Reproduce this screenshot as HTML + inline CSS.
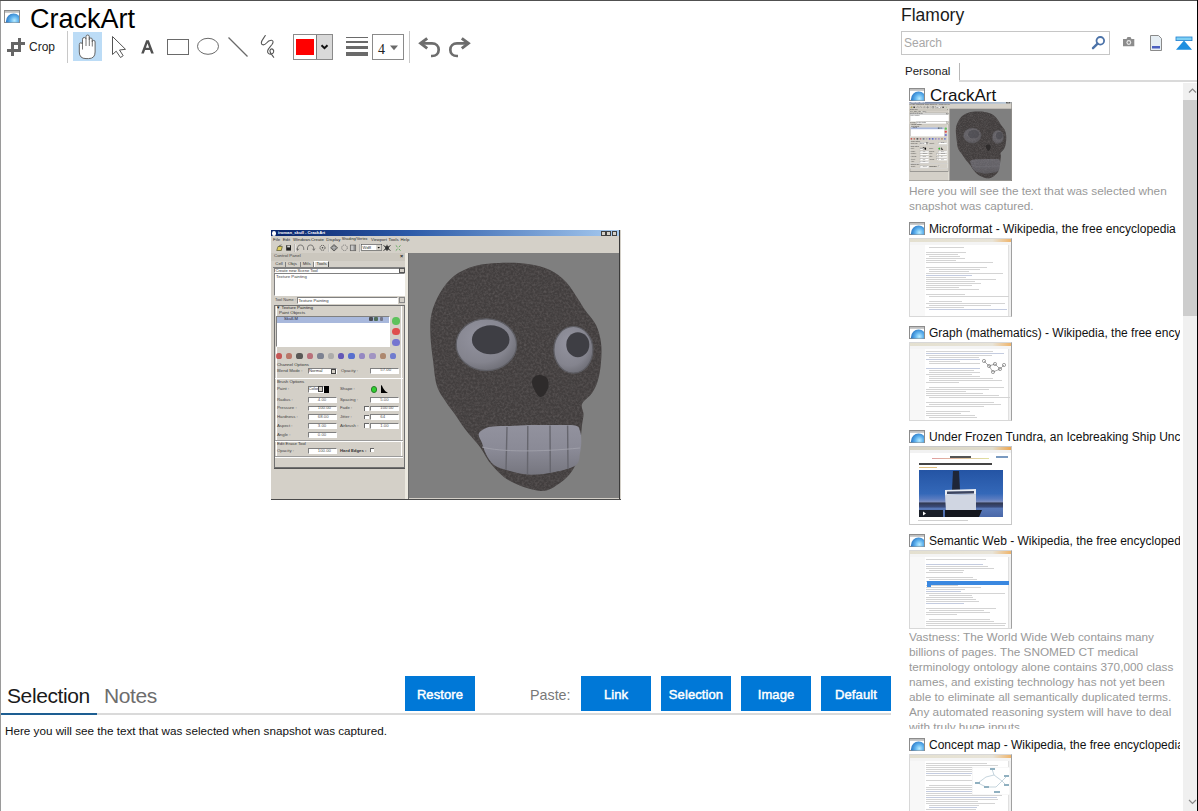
<!DOCTYPE html>
<html><head><meta charset="utf-8">
<style>
*{box-sizing:border-box}
html,body{margin:0;padding:0}
body{width:1198px;height:811px;overflow:hidden;background:#fff;position:relative;font-family:"Liberation Sans",sans-serif;color:#000}
.a{position:absolute}
.t{position:absolute;white-space:nowrap;line-height:1}
.ca{position:absolute;overflow:hidden}
.ca i,.ca b{position:absolute;display:block;box-sizing:border-box}
.ca b{font-weight:normal;white-space:nowrap;line-height:1;font-style:normal}
.ca2 .lt{opacity:.45}.ca2 .lp{opacity:.5}.ca2 .tb{opacity:.45}
.btn{position:absolute;top:676px;width:70px;height:35px;background:#0078d7;color:#fff;font-size:13px;text-align:center;line-height:37px;-webkit-text-stroke:0.45px #fff;letter-spacing:0.1px}
</style></head><body>
<!-- frame borders -->
<div class="a" style="left:0;top:0;width:1198px;height:1px;background:#505050"></div>
<div class="a" style="left:0;top:1px;width:1px;height:810px;background:#9a9a9a"></div>
<div class="a" style="left:1197px;top:0;width:1px;height:811px;background:#000"></div>

<!-- LEFT: title -->
<svg class="a" style="left:4px;top:10px" width="16" height="13" viewBox="0 0 16 13"><defs><radialGradient id="g99" cx="0.55" cy="0.45" r="0.6"><stop offset="0" stop-color="#b8ecff"/><stop offset="0.45" stop-color="#5fb2ee"/><stop offset="1" stop-color="#1f6cbc"/></radialGradient><clipPath id="c99"><rect x="1" y="2.5" width="14" height="10"/></clipPath></defs><rect x="0.5" y="0.5" width="15" height="12" fill="#fff" stroke="#8c8c8c"/><rect x="1" y="1" width="14" height="1.8" fill="#c0c0c0"/><circle cx="9.6" cy="11.2" r="7.6" fill="url(#g99)" clip-path="url(#c99)"/></svg>
<div class="t" style="left:30px;top:6px;font-size:27px">CrackArt</div>

<!-- toolbar -->
<!-- crop icon -->
<svg class="a" style="left:0;top:30px" width="30" height="30" viewBox="0 30 30 30">
<g fill="#666"><rect x="11" y="42" width="3" height="14"/><rect x="18" y="38" width="3" height="14"/><rect x="11" y="42" width="14" height="3"/><rect x="7" y="49" width="14" height="3"/></g></svg>
<div class="t" style="left:29px;top:41px;font-size:12px;color:#222">Crop</div>
<div class="a" style="left:67px;top:31px;width:1px;height:32px;background:#c8c8c8"></div>
<div class="a" style="left:73px;top:32px;width:29px;height:29px;background:#bcdcf6"></div>
<svg class="a" style="left:0;top:0" width="480" height="70" viewBox="0 0 480 70">
 <!-- hand -->
 <path d="M79.3 52 L79.3 44.5 Q79.3 42.8 80.9 42.8 Q82.5 42.8 82.5 44.5 L82.5 39.2 Q82.5 37.5 84.25 37.5 Q86 37.5 86 39.2 L86 36.7 Q86 35 87.65 35 Q89.3 35 89.3 36.7 L89.3 39.7 Q89.3 38 90.8 38 Q92.3 38 92.3 39.7 L92.3 42 Q92.3 40.4 93.7 40.4 Q95.1 40.4 95.1 42 L95.1 52 Q95.1 58.6 88.5 58.6 L86 58.6 Q79.3 58.6 79.3 52 Z" fill="#fff" stroke="#666" stroke-width="1"/>
 <path d="M82.5 44.5 L82.5 49.5 M86 39.2 L86 46 M89.3 36.7 L89.3 46 M92.3 39.7 L92.3 46.5" stroke="#666" stroke-width="0.9" fill="none"/>
 <!-- cursor -->
 <path d="M112.5 36.5 L112.5 54.5 L116.2 51.2 L120.5 57.5 L123.2 55.7 L119.5 50 L125.5 49.3 Z" fill="#fff" stroke="#555" stroke-width="1" stroke-linejoin="round"/>
 <!-- A -->
 <path d="M141.2 53.6 L146.2 40.2 L148.8 40.2 L153.8 53.6 L151.2 53.6 L149.9 50 L145.1 50 L143.8 53.6 Z M145.9 47.8 L149.1 47.8 L147.5 43.2 Z" fill="#505050" fill-rule="evenodd"/>
 <!-- rect -->
 <rect x="167.5" y="39.5" width="21" height="15" fill="none" stroke="#6a6a6a" stroke-width="1"/>
 <!-- ellipse -->
 <ellipse cx="208" cy="46.3" rx="10.5" ry="8" fill="none" stroke="#6a6a6a" stroke-width="1"/>
 <!-- line -->
 <path d="M228.5 37.5 L247.5 56.5" stroke="#6a6a6a" stroke-width="1.2"/>
 <!-- squiggle -->
 <path d="M265.3 35.5 C264 38 261 40.5 261.3 43 C261.5 45.5 264.5 45.5 266.5 43 C268 41 269 40 271.5 40.2 C273.5 40.5 273.5 42.5 272 44.5 C270 47 268 48.5 267.6 51 C267.3 53.5 269.5 54.5 271.5 54 C273.5 53.5 274.5 51 273 49.5 C271.5 48 269.5 49.5 270 51.5 C270.5 53.5 272.5 55.5 273.7 57.3" fill="none" stroke="#555" stroke-width="1.1" stroke-linecap="round"/>
 <!-- color picker -->
 <rect x="293.5" y="34.5" width="39" height="25" fill="#fff" stroke="#8a8a8a"/>
 <rect x="296" y="39" width="18" height="16" fill="#f00"/>
 <rect x="316" y="35" width="16" height="24" fill="#d9d9d9"/>
 <path d="M316.5 35 L316.5 59" stroke="#7a7a7a"/>
 <path d="M321.5 45.2 L324.5 48.2 L327.5 45.2" fill="none" stroke="#111" stroke-width="2"/>
 <!-- line widths -->
 <rect x="346" y="37" width="22" height="1" fill="#6a6a6a"/>
 <rect x="346" y="41" width="22" height="2" fill="#6a6a6a"/>
 <rect x="346" y="46" width="22" height="3" fill="#6a6a6a"/>
 <rect x="346" y="52" width="22" height="4" fill="#6a6a6a"/>
 <rect x="372.5" y="34.5" width="31" height="25" fill="#fff" stroke="#8a8a8a"/>
 <path d="M390 45.5 L398 45.5 L394 50.3 Z" fill="#6a6a6a"/>
 <!-- sep -->
 <rect x="409" y="31" width="1" height="32" fill="#c8c8c8"/>
 <!-- undo -->
 <path d="M420.5 43.3 L432 43.3 C436 43.3 438.7 46 438.7 49.7 C438.7 53.4 436 56 432 56 L431 56" fill="none" stroke="#6d6d6d" stroke-width="2.7"/>
 <path d="M427.2 38.3 L420.6 43.3 L427.2 48.3" fill="none" stroke="#6d6d6d" stroke-width="2.9" stroke-linejoin="miter" stroke-miterlimit="10"/>
 <!-- redo -->
 <path d="M468.5 43.3 L457 43.3 C453 43.3 450.3 46 450.3 49.7 C450.3 53.4 453 56 457 56 L458 56" fill="none" stroke="#6d6d6d" stroke-width="2.7"/>
 <path d="M461.8 38.3 L468.4 43.3 L461.8 48.3" fill="none" stroke="#6d6d6d" stroke-width="2.9" stroke-linejoin="miter" stroke-miterlimit="10"/>
</svg>
<div class="t" style="left:378px;top:43px;font-size:14px;font-family:'Liberation Serif',serif;color:#222">4</div>



<!-- CENTER IMAGE -->
<div class="ca" style="left:271px;top:230px;width:350px;height:270px"><i style="left:0px;top:0px;width:350px;height:270px;background:#d4d0c8;"></i><i class="tb" style="left:0px;top:0px;width:348px;height:6.3px;background:linear-gradient(90deg,#0a246a 0%,#2c5aa8 40%,#a6caf0 100%);"></i><b style="left:7px;top:0.9px;font-size:4.2px;color:#fff;font-weight:bold">iroman_skull - CrackArt</b><i style="left:1.2px;top:0.8px;width:4.2px;height:4.8px;background:#fff;border-radius:50%"></i><i style="left:330px;top:0.6px;width:5px;height:5px;background:#d4d0c8;border:0.5px solid #404040"></i><i style="left:335.2px;top:0.6px;width:5px;height:5px;background:#d4d0c8;border:0.5px solid #404040"></i><i style="left:341.2px;top:0.6px;width:5px;height:5px;background:#d4d0c8;border:0.5px solid #404040"></i><b style="left:2px;top:7.8px;font-size:4.4px;color:#2a2a2a;">File</b><b style="left:11.7px;top:7.8px;font-size:4.4px;color:#2a2a2a;">Edit</b><b style="left:22px;top:7.8px;font-size:4.3px;color:#2a2a2a;">Windows</b><b style="left:40px;top:7.8px;font-size:4.3px;color:#2a2a2a;">Create</b><b style="left:55.3px;top:7.8px;font-size:4.3px;color:#2a2a2a;">Display</b><b style="left:70.7px;top:7.8px;font-size:3.8px;color:#2a2a2a;">Shading/Vertex</b><b style="left:100px;top:7.8px;font-size:4.1px;color:#2a2a2a;">Viewport</b><b style="left:117.5px;top:7.8px;font-size:4.3px;color:#2a2a2a;">Tools</b><b style="left:129.5px;top:7.8px;font-size:4.3px;color:#2a2a2a;">Help</b><svg style="position:absolute;left:0;top:0" width="140" height="24" viewBox="0 0 140 24">
<path d="M5.7 20.5 L7 16.5 L11.3 16.5 L10.3 20.5Z" fill="#e0d060" stroke="#404020" stroke-width="0.6"/><path d="M8 16 L10.5 14.8" stroke="#303030" stroke-width="0.6"/>
<rect x="15.2" y="15.2" width="4.8" height="5.4" fill="#202020"/><rect x="16.2" y="15.6" width="2.8" height="1.8" fill="#d8d8d8"/>
<rect x="23.5" y="14" width="0.6" height="8" fill="#9a9a9a"/><rect x="24.1" y="14" width="0.5" height="8" fill="#fff"/>
<path d="M26.5 20 Q26 15 29.5 15 Q33 15 32.8 20" fill="none" stroke="#505050" stroke-width="0.7"/><path d="M25.5 18.5 L26.5 20.5 L28 18.8" fill="none" stroke="#505050" stroke-width="0.6"/>
<path d="M36.5 20 Q36 15 39.5 15 Q43 15 42.8 20" fill="none" stroke="#505050" stroke-width="0.7"/><path d="M41.5 18.8 L42.8 20.5 L44 18.5" fill="none" stroke="#505050" stroke-width="0.6"/>
<circle cx="51.5" cy="17.8" r="2.5" fill="none" stroke="#404040" stroke-width="0.9" stroke-dasharray="1.2 0.8"/><circle cx="51.5" cy="17.8" r="0.8" fill="#404040"/>
<rect x="57.2" y="14" width="0.6" height="8" fill="#9a9a9a"/><rect x="57.8" y="14" width="0.5" height="8" fill="#fff"/>
<path d="M63 14.6 L66.6 17.8 L63 21 L59.6 17.8Z" fill="#808080" stroke="#303030" stroke-width="0.6"/><path d="M60.5 17.8 L65.7 17.8 M63 15.5 L63 20" stroke="#e0e0e0" stroke-width="0.5"/>
<circle cx="73.5" cy="17.8" r="2.8" fill="none" stroke="#606060" stroke-width="0.7" stroke-dasharray="1.4 0.8"/>
<rect x="79.2" y="15" width="5.6" height="5.8" fill="#909090" stroke="#505050" stroke-width="0.5"/><rect x="80" y="15.6" width="2.5" height="4.5" fill="#c8c8c8"/>
<rect x="88.4" y="14" width="0.6" height="8" fill="#9a9a9a"/><rect x="89" y="14" width="0.5" height="8" fill="#fff"/>
<rect x="90.2" y="14.3" width="20.5" height="6.3" fill="#fff" stroke="#404040" stroke-width="0.6"/><rect x="105.2" y="15" width="5" height="5" fill="#d4d0c8"/><path d="M106.5 17 L108.9 17 L107.7 18.5Z" fill="#000"/>
<text x="91.5" y="19.3" font-size="4.2" fill="#333" font-family="Liberation Sans">Wd8</text>
<path d="M112.5 15.5 L119.5 20.5 M119.5 15.5 L112.5 20.5 M116 14.8 L116 21" stroke="#202020" stroke-width="0.9"/><circle cx="116" cy="18" r="2" fill="#303030"/>
<path d="M124.8 15.5 L126.5 17 M129.5 15.5 L127.8 17 M124.8 20.5 L126.5 19 M129.5 20.5 L127.8 19" stroke="#40a040" stroke-width="0.8"/>
</svg>
<i style="left:137.5px;top:23px;width:210.5px;height:245px;background:#7f7f7f;"></i><i style="left:134px;top:23px;width:3px;height:247px;background:#ece9e0;"></i><i style="left:136.6px;top:23px;width:1px;height:247px;background:#6a6a6a;"></i><i style="left:348px;top:0px;width:1.2px;height:270px;background:#3a3a3a;"></i><i style="left:0px;top:268.6px;width:350px;height:1.4px;background:#4a4a4a;"></i><i style="left:0px;top:23px;width:134px;height:8px;background:#cbc7be;"></i><b style="left:3px;top:24.4px;font-size:4.4px;color:#444;">Control Panel</b><b style="left:129px;top:24px;font-size:5.5px;color:#222;font-weight:bold">×</b><i style="left:2px;top:31px;width:56px;height:6.3px;background:#d4d0c8;"></i><i style="left:2.3px;top:31.6px;width:12.7px;height:5.7px;background:#d4d0c8;border-right:0.7px solid #808080"></i><b style="left:4.3px;top:32.4px;font-size:4.3px;color:#333;">Cell</b><i style="left:15px;top:31.6px;width:14.7px;height:5.7px;background:#d4d0c8;border-right:0.7px solid #808080"></i><b style="left:17px;top:32.4px;font-size:4.3px;color:#333;">Objs</b><i style="left:29.7px;top:31.6px;width:13.3px;height:5.7px;background:#d4d0c8;border-right:0.7px solid #808080"></i><b style="left:31.7px;top:32.4px;font-size:4.3px;color:#333;">Mtls</b><i style="left:43px;top:31px;width:15.3px;height:6.3px;background:#e0ddd6;border-right:0.8px solid #555;border-left:0.5px solid #fff;border-top:0.5px solid #fff"></i><b style="left:45.5px;top:31.8px;font-size:4.3px;color:#222;">Tools</b><i style="left:2px;top:37px;width:132px;height:0.7px;background:#808080;"></i><i style="left:3px;top:37.5px;width:131px;height:5.4px;background:#fff;border-top:1px solid #808080;border-left:1px solid #808080;border-right:1px solid #fff;border-bottom:1px solid #fff"></i><b style="left:4.5px;top:38.6px;font-size:4.1px;color:#333;">Create new Scene Tool</b><i style="left:128px;top:38.2px;width:5.5px;height:4.4px;background:#d4d0c8;border:0.5px solid #555"></i><i style="left:3px;top:43.2px;width:131px;height:23.3px;background:#fff;border-top:1px solid #808080;border-left:1px solid #808080;border-right:1px solid #fff;border-bottom:1px solid #fff"></i><b style="left:5px;top:44.5px;font-size:4.3px;color:#444;">Texture Painting</b><b style="left:4px;top:68.3px;font-size:3.9px;color:#444;">Tool Name :</b><i style="left:26px;top:67.4px;width:101.3px;height:6.5px;background:#fff;border-top:1px solid #808080;border-left:1px solid #808080;border-right:1px solid #fff;border-bottom:1px solid #fff"></i><b style="left:27.5px;top:68.6px;font-size:4.2px;color:#333;">Texture Painting</b><i style="left:128px;top:67px;width:6px;height:6px;background:#d4d0c8;border:0.5px solid #888"></i><i style="left:2.5px;top:75px;width:131px;height:163px;background:transparent;border:0.7px solid #707070"></i><i style="left:4.5px;top:75.5px;width:126px;height:150px;background:#d4d0c8;"></i><i style="left:4.5px;top:75.5px;width:1px;height:150px;background:#fff;"></i><i style="left:129.6px;top:75.5px;width:1px;height:150px;background:#fff;"></i><b style="left:5px;top:75.7px;font-size:4.4px;color:#222;">▼ Texture Painting</b><b style="left:8px;top:80.8px;font-size:4.4px;color:#333;">Paint Objects</b><i style="left:5.3px;top:86.3px;width:113.7px;height:30.7px;background:#fff;border-top:1px solid #808080;border-left:1px solid #808080;border-right:1px solid #fff;border-bottom:1px solid #fff"></i><i style="left:6.3px;top:87.2px;width:111.7px;height:5.6px;background:#a8b8dc;"></i><b style="left:13px;top:86.8px;font-size:4.2px;color:#223;">Skull-M</b><i style="left:98px;top:87.2px;width:3.6px;height:3.6px;background:#333;border-radius:1px;opacity:.8"></i><i style="left:103px;top:87.2px;width:3.6px;height:3.6px;background:#3a5a3a;border-radius:1px;opacity:.8"></i><i style="left:108.5px;top:87.2px;width:3.6px;height:3.6px;background:#667;border-radius:1px;opacity:.8"></i><i style="left:121.4px;top:87.2px;width:7.6px;height:7.6px;background:#50c050;border-radius:50%;opacity:.9"></i><i style="left:121.4px;top:97.9px;width:7.6px;height:7.6px;background:#e04040;border-radius:50%;opacity:.9"></i><i style="left:121.4px;top:108.60000000000001px;width:7.6px;height:7.6px;background:#6a6ad0;border-radius:50%;opacity:.9"></i><i style="left:4.5px;top:122.5px;width:6.5px;height:6.5px;background:#c03030;border-radius:40%;opacity:.75"></i><i style="left:14.9px;top:122.5px;width:6.5px;height:6.5px;background:#b05a4a;border-radius:40%;opacity:.75"></i><i style="left:25.3px;top:122.5px;width:6.5px;height:6.5px;background:#303030;border-radius:40%;opacity:.75"></i><i style="left:35.7px;top:122.5px;width:6.5px;height:6.5px;background:#b05060;border-radius:40%;opacity:.75"></i><i style="left:46.1px;top:122.5px;width:6.5px;height:6.5px;background:#606880;border-radius:40%;opacity:.75"></i><i style="left:56.5px;top:122.5px;width:6.5px;height:6.5px;background:#a0a0a0;border-radius:40%;opacity:.75"></i><i style="left:66.9px;top:122.5px;width:6.5px;height:6.5px;background:#4030b0;border-radius:40%;opacity:.75"></i><i style="left:77.3px;top:122.5px;width:6.5px;height:6.5px;background:#3050d0;border-radius:40%;opacity:.75"></i><i style="left:87.7px;top:122.5px;width:6.5px;height:6.5px;background:#8070c0;border-radius:40%;opacity:.75"></i><i style="left:98.10000000000001px;top:122.5px;width:6.5px;height:6.5px;background:#9080c0;border-radius:40%;opacity:.75"></i><i style="left:108.5px;top:122.5px;width:6.5px;height:6.5px;background:#a07050;border-radius:40%;opacity:.75"></i><i style="left:118.9px;top:122.5px;width:6.5px;height:6.5px;background:#5060d0;border-radius:40%;opacity:.75"></i><b style="left:6px;top:132.6px;font-size:4.3px;color:#333;">Channel Options</b><b style="left:6px;top:138.8px;font-size:4.3px;color:#444;">Blend Mode :</b><i style="left:36.5px;top:137.7px;width:29.5px;height:6.8px;background:#fff;border-top:1px solid #808080;border-left:1px solid #808080;border-right:1px solid #fff;border-bottom:1px solid #fff"></i><b style="left:38px;top:138.9px;font-size:4.2px;color:#333;">Normal</b><i style="left:60px;top:138.6px;width:5.4px;height:5px;background:#d4d0c8;border:0.5px solid #444"></i><b style="left:70px;top:139px;font-size:4.3px;color:#444;">Opacity :</b><i style="left:99px;top:137.7px;width:29.4px;height:6.8px;background:#fff;border-top:1px solid #808080;border-left:1px solid #808080;border-right:1px solid #fff;border-bottom:1px solid #fff"></i><b style="left:109.28999999999999px;top:138.29999999999998px;font-size:4.3px;color:#555;">57.00</b><i style="left:3.5px;top:147.6px;width:128px;height:0.6px;background:#9a9a9a;"></i><i style="left:3.5px;top:148.2px;width:128px;height:0.6px;background:#fff;"></i><b style="left:6px;top:149.8px;font-size:4.3px;color:#333;">Brush Options</b><b style="left:6px;top:156.8px;font-size:4.3px;color:#444;">Paint :</b><i style="left:36.5px;top:155.6px;width:16px;height:7.2px;background:#fff;border-top:1px solid #808080;border-left:1px solid #808080;border-right:1px solid #fff;border-bottom:1px solid #fff"></i><b style="left:37.5px;top:157px;font-size:4.1px;color:#333;">Color</b><i style="left:47px;top:156.4px;width:5px;height:5.6px;background:#d4d0c8;border:0.5px solid #444"></i><i style="left:53px;top:155.6px;width:5.2px;height:7.4px;background:#000;"></i><b style="left:69px;top:157px;font-size:4.3px;color:#444;">Shape :</b><i style="left:99.5px;top:156px;width:6.5px;height:6.5px;background:#30d030;border-radius:50%;border:0.6px solid #2a7a2a"></i><svg style="position:absolute;left:109px;top:154px" width="10" height="10" viewBox="0 0 10 10"><path d="M1 1 Q2 1 3 4 Q5 8 8 9 L1 9Z" fill="#000"/></svg><b style="left:6px;top:167.8px;font-size:4.3px;color:#444;">Radius :</b><i style="left:36.5px;top:167px;width:29.5px;height:5.8px;background:#fff;border-top:1px solid #808080;border-left:1px solid #808080;border-right:1px solid #fff;border-bottom:1px solid #fff"></i><b style="left:46.825px;top:167.6px;font-size:4.3px;color:#555;">4.00</b><b style="left:69px;top:167.8px;font-size:4.3px;color:#444;">Spacing :</b><i style="left:99px;top:167px;width:29.4px;height:5.8px;background:#fff;border-top:1px solid #808080;border-left:1px solid #808080;border-right:1px solid #fff;border-bottom:1px solid #fff"></i><b style="left:109.28999999999999px;top:167.6px;font-size:4.3px;color:#555;">5.00</b><b style="left:6px;top:176.4px;font-size:4.3px;color:#444;">Pressure :</b><i style="left:36.5px;top:175.6px;width:29.5px;height:5.8px;background:#fff;border-top:1px solid #808080;border-left:1px solid #808080;border-right:1px solid #fff;border-bottom:1px solid #fff"></i><b style="left:46.825px;top:176.2px;font-size:4.3px;color:#555;">100.00</b><b style="left:69px;top:176.4px;font-size:4.3px;color:#444;">Fade :</b><i style="left:99px;top:175.6px;width:29.4px;height:5.8px;background:#fff;border-top:1px solid #808080;border-left:1px solid #808080;border-right:1px solid #fff;border-bottom:1px solid #fff"></i><b style="left:109.28999999999999px;top:176.2px;font-size:4.3px;color:#555;">100.00</b><i style="left:93.4px;top:175.79999999999998px;width:4.2px;height:4.8px;background:#fff;border-top:0.6px solid #666;border-left:0.6px solid #666"></i><b style="left:6px;top:185.20000000000002px;font-size:4.3px;color:#444;">Hardness :</b><i style="left:36.5px;top:184.4px;width:29.5px;height:5.8px;background:#fff;border-top:1px solid #808080;border-left:1px solid #808080;border-right:1px solid #fff;border-bottom:1px solid #fff"></i><b style="left:46.825px;top:185.0px;font-size:4.3px;color:#555;">68.00</b><b style="left:69px;top:185.20000000000002px;font-size:4.3px;color:#444;">Jitter :</b><i style="left:99px;top:184.4px;width:29.4px;height:5.8px;background:#fff;border-top:1px solid #808080;border-left:1px solid #808080;border-right:1px solid #fff;border-bottom:1px solid #fff"></i><b style="left:109.28999999999999px;top:185.0px;font-size:4.3px;color:#555;">64</b><i style="left:93.4px;top:184.6px;width:4.2px;height:4.8px;background:#fff;border-top:0.6px solid #666;border-left:0.6px solid #666"></i><b style="left:6px;top:193.8px;font-size:4.3px;color:#444;">Aspect :</b><i style="left:36.5px;top:193px;width:29.5px;height:5.8px;background:#fff;border-top:1px solid #808080;border-left:1px solid #808080;border-right:1px solid #fff;border-bottom:1px solid #fff"></i><b style="left:46.825px;top:193.6px;font-size:4.3px;color:#555;">3.00</b><b style="left:69px;top:193.8px;font-size:4.3px;color:#444;">Airbrush :</b><i style="left:99px;top:193px;width:29.4px;height:5.8px;background:#fff;border-top:1px solid #808080;border-left:1px solid #808080;border-right:1px solid #fff;border-bottom:1px solid #fff"></i><b style="left:109.28999999999999px;top:193.6px;font-size:4.3px;color:#555;">1.00</b><i style="left:93.4px;top:193.2px;width:4.2px;height:4.8px;background:#fff;border-top:0.6px solid #666;border-left:0.6px solid #666"></i><b style="left:6px;top:202.8px;font-size:4.3px;color:#444;">Angle :</b><i style="left:36.5px;top:202px;width:29.5px;height:5.8px;background:#fff;border-top:1px solid #808080;border-left:1px solid #808080;border-right:1px solid #fff;border-bottom:1px solid #fff"></i><b style="left:46.825px;top:202.6px;font-size:4.3px;color:#555;">0.00</b><i style="left:3.5px;top:210.2px;width:128px;height:0.6px;background:#9a9a9a;"></i><i style="left:3.5px;top:210.8px;width:128px;height:0.6px;background:#fff;"></i><b style="left:6px;top:212.4px;font-size:4.3px;color:#333;">Edit Erase Tool</b><b style="left:6px;top:218.9px;font-size:4.3px;color:#444;">Opacity :</b><i style="left:36.5px;top:218px;width:29.5px;height:5.8px;background:#fff;border-top:1px solid #808080;border-left:1px solid #808080;border-right:1px solid #fff;border-bottom:1px solid #fff"></i><b style="left:46.825px;top:218.6px;font-size:4.3px;color:#555;">100.00</b><b style="left:69px;top:218.9px;font-size:4.3px;color:#333;font-weight:bold">Hard Edges :</b><i style="left:98.7px;top:217.6px;width:4.5px;height:4.8px;background:#fff;border-top:0.6px solid #666;border-left:0.6px solid #666"></i><i style="left:3.5px;top:226px;width:128px;height:0.6px;background:#9a9a9a;"></i><i style="left:3.5px;top:226.6px;width:128px;height:0.6px;background:#fff;"></i><i style="left:2.5px;top:237.5px;width:131px;height:0.8px;background:#555;"></i><svg style="position:absolute;left:0;top:0" width="350" height="270" viewBox="271 230 350 270">
<defs>
<filter id="nz1" x="0" y="0" width="1" height="1" color-interpolation-filters="sRGB"><feTurbulence type="fractalNoise" baseFrequency="0.45" numOctaves="2" seed="7"/><feColorMatrix values="0 0 0 0 0.40  0 0 0 0 0.38  0 0 0 0 0.38  1.2 0 0 0 -0.42"/><feComposite in2="SourceGraphic" operator="in"/></filter>
<radialGradient id="eyeL1" cx="0.4" cy="0.35" r="0.7"><stop offset="0" stop-color="#9494a0"/><stop offset="0.7" stop-color="#84848e"/><stop offset="1" stop-color="#6c6c74"/></radialGradient>
<linearGradient id="teeth1" x1="0" y1="0" x2="0" y2="1"><stop offset="0" stop-color="#92929e"/><stop offset="0.5" stop-color="#8a8a96"/><stop offset="1" stop-color="#76767f"/></linearGradient>
</defs>
<path d="M502.8 262.8 C494.0 263.1 483.1 263.8 475.0 266.0 C466.9 268.2 459.8 271.5 454.0 276.0 C448.2 280.5 443.8 286.7 440.0 293.0 C436.2 299.3 433.1 306.8 431.5 314.0 C429.9 321.2 430.2 328.3 430.5 336.0 C430.8 343.7 431.9 351.7 433.0 360.0 C434.1 368.3 434.8 379.0 437.0 386.0 C439.2 393.0 443.2 397.5 446.0 402.0 C448.8 406.5 450.8 408.5 454.0 413.0 C457.2 417.5 460.7 423.3 465.0 429.0 C469.3 434.7 475.7 441.2 480.0 447.0 C484.3 452.8 485.8 457.9 490.7 463.5 C495.6 469.1 501.4 476.2 509.7 480.8 C518.0 485.4 532.4 490.6 540.8 491.0 C549.2 491.4 554.8 486.3 560.0 483.0 C565.2 479.7 569.0 475.3 572.0 471.0 C575.0 466.7 576.6 462.2 578.0 457.0 C579.4 451.8 579.8 445.3 580.5 440.0 C581.2 434.7 581.5 429.3 582.0 425.0 C582.5 420.7 583.5 417.5 583.5 414.0 C583.5 410.5 580.6 407.5 582.0 404.0 C583.4 400.5 589.3 397.0 592.0 393.0 C594.7 389.0 596.5 385.2 598.0 380.0 C599.5 374.8 600.5 368.2 601.0 362.0 C601.5 355.8 601.8 349.2 601.0 343.0 C600.2 336.8 598.7 330.5 596.0 325.0 C593.3 319.5 588.0 314.3 585.0 310.0 C582.0 305.7 581.2 303.7 578.0 299.0 C574.8 294.3 570.7 286.8 566.0 282.0 C561.3 277.2 556.3 273.0 550.0 270.0 C543.7 267.0 535.9 265.2 528.0 264.0 C520.1 262.8 511.6 262.5 502.8 262.8 Z" fill="#423e3e"/>
<path d="M502.8 262.8 C494.0 263.1 483.1 263.8 475.0 266.0 C466.9 268.2 459.8 271.5 454.0 276.0 C448.2 280.5 443.8 286.7 440.0 293.0 C436.2 299.3 433.1 306.8 431.5 314.0 C429.9 321.2 430.2 328.3 430.5 336.0 C430.8 343.7 431.9 351.7 433.0 360.0 C434.1 368.3 434.8 379.0 437.0 386.0 C439.2 393.0 443.2 397.5 446.0 402.0 C448.8 406.5 450.8 408.5 454.0 413.0 C457.2 417.5 460.7 423.3 465.0 429.0 C469.3 434.7 475.7 441.2 480.0 447.0 C484.3 452.8 485.8 457.9 490.7 463.5 C495.6 469.1 501.4 476.2 509.7 480.8 C518.0 485.4 532.4 490.6 540.8 491.0 C549.2 491.4 554.8 486.3 560.0 483.0 C565.2 479.7 569.0 475.3 572.0 471.0 C575.0 466.7 576.6 462.2 578.0 457.0 C579.4 451.8 579.8 445.3 580.5 440.0 C581.2 434.7 581.5 429.3 582.0 425.0 C582.5 420.7 583.5 417.5 583.5 414.0 C583.5 410.5 580.6 407.5 582.0 404.0 C583.4 400.5 589.3 397.0 592.0 393.0 C594.7 389.0 596.5 385.2 598.0 380.0 C599.5 374.8 600.5 368.2 601.0 362.0 C601.5 355.8 601.8 349.2 601.0 343.0 C600.2 336.8 598.7 330.5 596.0 325.0 C593.3 319.5 588.0 314.3 585.0 310.0 C582.0 305.7 581.2 303.7 578.0 299.0 C574.8 294.3 570.7 286.8 566.0 282.0 C561.3 277.2 556.3 273.0 550.0 270.0 C543.7 267.0 535.9 265.2 528.0 264.0 C520.1 262.8 511.6 262.5 502.8 262.8 Z" fill="#000" filter="url(#nz1)"/>
<ellipse class="lt" cx="486.4" cy="344.7" rx="30.2" ry="25.9" fill="url(#eyeL1)" stroke="#5e5e64" stroke-width="1.2"/>
<ellipse class="lp" cx="490.7" cy="339.8" rx="18.8" ry="14.5" fill="#3e3e44"/>
<ellipse class="lt" cx="573.4" cy="349.8" rx="19.5" ry="23.3" fill="url(#eyeL1)" stroke="#5e5e64" stroke-width="1.2"/>
<ellipse class="lp" cx="577.8" cy="344.7" rx="11.5" ry="12.5" fill="#3e3e44"/>
<path d="M534.0 377.0 C535.3 375.7 537.8 374.8 540.0 375.0 C542.2 375.2 545.6 376.2 547.0 378.0 C548.4 379.8 548.8 383.3 548.5 386.0 C548.2 388.7 546.4 392.2 545.0 394.0 C543.6 395.8 541.7 397.5 540.0 397.0 C538.3 396.5 536.3 393.3 535.0 391.0 C533.7 388.7 532.2 385.3 532.0 383.0 C531.8 380.7 532.7 378.3 534.0 377.0 Z" fill="#2e2b2b"/>
<path d="M478.7 434.0 C479.2 431.6 482.7 429.8 485.0 428.5 C487.3 427.2 488.3 426.8 492.5 426.4 C496.7 426.0 503.8 426.2 510.0 426.0 C516.2 425.8 522.5 425.2 530.0 425.0 C537.5 424.8 547.5 424.9 555.0 425.0 C562.5 425.1 571.1 424.6 575.3 425.6 C579.5 426.6 579.0 428.4 580.0 431.0 C581.0 433.6 581.3 437.3 581.3 441.0 C581.3 444.7 580.9 449.0 580.0 453.0 C579.1 457.0 580.2 461.8 576.0 465.0 C571.8 468.2 562.6 470.4 555.0 472.0 C547.4 473.6 537.9 475.0 530.4 474.8 C522.9 474.6 516.1 472.6 510.0 471.0 C503.9 469.4 498.0 467.8 494.0 465.0 C490.0 462.2 488.0 457.7 486.0 454.0 C484.0 450.3 483.2 446.3 482.0 443.0 C480.8 439.7 478.2 436.4 478.7 434.0 Z" fill="url(#teeth1)" class="lt"/>
<path d="M507 427 L506 470 M527.8 426 L527.5 474.5 M550 425.5 L550.3 473 M567.6 425.5 L568 469" stroke="#66666e" stroke-width="1.4" class="lt"/>
<path d="M482 447 C500 452 540 452 580 448" stroke="#a0a0aa" stroke-width="0.9" fill="none" class="lt"/>
</svg></div>
<!-- BOTTOM LEFT -->
<div class="t" style="left:7px;top:685px;font-size:21px;letter-spacing:-0.4px;color:#1a1a1a">Selection</div>
<div class="t" style="left:104px;top:685px;font-size:21px;letter-spacing:-0.4px;color:#6d6d6d">Notes</div>
<div class="a" style="left:1px;top:713px;width:890px;height:2px;background:#dadada"></div>
<div class="a" style="left:1px;top:713px;width:96px;height:2px;background:#1d5e92"></div>
<div class="btn" style="left:405px">Restore</div>
<div class="t" style="left:530px;top:688px;font-size:14.3px;color:#787878">Paste:</div>
<div class="btn" style="left:581px">Link</div>
<div class="btn" style="left:661px">Selection</div>
<div class="btn" style="left:741px">Image</div>
<div class="btn" style="left:821px">Default</div>
<div class="t" style="left:5px;top:725px;font-size:11.7px;color:#111">Here you will see the text that was selected when snapshot was captured.</div>
<!-- RIGHT PANEL -->
<div class="t" style="left:901px;top:7px;font-size:17.5px;color:#1a1a1a">Flamory</div>
<div class="a" style="left:901px;top:31px;width:209px;height:24px;border:1px solid #c6c6c6;background:#fff"></div>
<div class="t" style="left:904px;top:37px;font-size:12px;color:#a8a8a8">Search</div>
<svg class="a" style="left:1080px;top:25px" width="118" height="40" viewBox="1080 25 118 40">
 <circle cx="1100.3" cy="40.8" r="3.8" fill="none" stroke="#4b72a8" stroke-width="1.8"/>
 <path d="M1097.6 43.6 L1093 48.2" stroke="#4b72a8" stroke-width="2.4" stroke-linecap="round"/>
 <!-- camera -->
 <path d="M1123 39 L1126.5 39 L1127.5 37 L1130.5 37 L1131.5 39 L1134.3 39 L1134.3 46.3 L1123 46.3 Z" fill="#8c8c8c"/>
 <circle cx="1128.8" cy="42.5" r="2.4" fill="#e8e8e8"/>
 <circle cx="1128.8" cy="42.5" r="1.2" fill="#8c8c8c"/>
 <!-- doc -->
 <path d="M1150.5 35.5 L1158.5 35.5 L1161.5 38.5 L1161.5 50.5 L1150.5 50.5 Z" fill="#e6eef4" stroke="#8a8a8a" stroke-width="1"/>
 <rect x="1152" y="46" width="8" height="2.5" fill="#4a5fc0"/>
 <!-- blue -->
 <rect x="1176" y="37" width="16" height="3.6" fill="#7fd0f4" stroke="#1f7fd0" stroke-width="0.8"/>
 <path d="M1184 40.6 L1192 49.8 L1176 49.8 Z" fill="#1d8ee0"/>
</svg>
<div class="t" style="left:905px;top:66px;font-size:11.5px;color:#1a1a1a">Personal</div>
<div class="a" style="left:959px;top:63px;width:1px;height:19px;background:#b8b8b8"></div>
<div class="a" style="left:959px;top:80px;width:238px;height:2px;background:#dadada"></div>

<!-- LIST -->
<div class="a" style="left:895px;top:83px;width:288px;height:728px;overflow:hidden">
<div style="position:absolute;left:-895px;top:-83px;width:1198px;height:811px">
<svg class="a" style="left:909px;top:88px" width="16" height="13" viewBox="0 0 16 13"><defs><radialGradient id="g1" cx="0.55" cy="0.45" r="0.6"><stop offset="0" stop-color="#b8ecff"/><stop offset="0.45" stop-color="#5fb2ee"/><stop offset="1" stop-color="#1f6cbc"/></radialGradient><clipPath id="c1"><rect x="1" y="2.5" width="14" height="10"/></clipPath></defs><rect x="0.5" y="0.5" width="15" height="12" fill="#fff" stroke="#8c8c8c"/><rect x="1" y="1" width="14" height="1.8" fill="#c0c0c0"/><circle cx="9.6" cy="11.2" r="7.6" fill="url(#g1)" clip-path="url(#c1)"/></svg>
<div class="t" style="left:930px;top:87px;font-size:17px;color:#111">CrackArt</div>
<div class="ca ca2" style="left:909px;top:102px;width:103px;height:79px"><div style="position:absolute;left:0;top:0;width:350px;height:270px;transform:scale(0.2943,0.2926);transform-origin:0 0"><i style="left:0px;top:0px;width:350px;height:270px;background:#d4d0c8;"></i><i class="tb" style="left:0px;top:0px;width:348px;height:6.3px;background:linear-gradient(90deg,#0a246a 0%,#2c5aa8 40%,#a6caf0 100%);"></i><b style="left:7px;top:0.9px;font-size:4.2px;color:#fff;font-weight:bold">iroman_skull - CrackArt</b><i style="left:1.2px;top:0.8px;width:4.2px;height:4.8px;background:#fff;border-radius:50%"></i><i style="left:330px;top:0.6px;width:5px;height:5px;background:#d4d0c8;border:0.5px solid #404040"></i><i style="left:335.2px;top:0.6px;width:5px;height:5px;background:#d4d0c8;border:0.5px solid #404040"></i><i style="left:341.2px;top:0.6px;width:5px;height:5px;background:#d4d0c8;border:0.5px solid #404040"></i><b style="left:2px;top:7.8px;font-size:4.4px;color:#2a2a2a;">File</b><b style="left:11.7px;top:7.8px;font-size:4.4px;color:#2a2a2a;">Edit</b><b style="left:22px;top:7.8px;font-size:4.3px;color:#2a2a2a;">Windows</b><b style="left:40px;top:7.8px;font-size:4.3px;color:#2a2a2a;">Create</b><b style="left:55.3px;top:7.8px;font-size:4.3px;color:#2a2a2a;">Display</b><b style="left:70.7px;top:7.8px;font-size:3.8px;color:#2a2a2a;">Shading/Vertex</b><b style="left:100px;top:7.8px;font-size:4.1px;color:#2a2a2a;">Viewport</b><b style="left:117.5px;top:7.8px;font-size:4.3px;color:#2a2a2a;">Tools</b><b style="left:129.5px;top:7.8px;font-size:4.3px;color:#2a2a2a;">Help</b><svg style="position:absolute;left:0;top:0" width="140" height="24" viewBox="0 0 140 24">
<path d="M5.7 20.5 L7 16.5 L11.3 16.5 L10.3 20.5Z" fill="#e0d060" stroke="#404020" stroke-width="0.6"/><path d="M8 16 L10.5 14.8" stroke="#303030" stroke-width="0.6"/>
<rect x="15.2" y="15.2" width="4.8" height="5.4" fill="#202020"/><rect x="16.2" y="15.6" width="2.8" height="1.8" fill="#d8d8d8"/>
<rect x="23.5" y="14" width="0.6" height="8" fill="#9a9a9a"/><rect x="24.1" y="14" width="0.5" height="8" fill="#fff"/>
<path d="M26.5 20 Q26 15 29.5 15 Q33 15 32.8 20" fill="none" stroke="#505050" stroke-width="0.7"/><path d="M25.5 18.5 L26.5 20.5 L28 18.8" fill="none" stroke="#505050" stroke-width="0.6"/>
<path d="M36.5 20 Q36 15 39.5 15 Q43 15 42.8 20" fill="none" stroke="#505050" stroke-width="0.7"/><path d="M41.5 18.8 L42.8 20.5 L44 18.5" fill="none" stroke="#505050" stroke-width="0.6"/>
<circle cx="51.5" cy="17.8" r="2.5" fill="none" stroke="#404040" stroke-width="0.9" stroke-dasharray="1.2 0.8"/><circle cx="51.5" cy="17.8" r="0.8" fill="#404040"/>
<rect x="57.2" y="14" width="0.6" height="8" fill="#9a9a9a"/><rect x="57.8" y="14" width="0.5" height="8" fill="#fff"/>
<path d="M63 14.6 L66.6 17.8 L63 21 L59.6 17.8Z" fill="#808080" stroke="#303030" stroke-width="0.6"/><path d="M60.5 17.8 L65.7 17.8 M63 15.5 L63 20" stroke="#e0e0e0" stroke-width="0.5"/>
<circle cx="73.5" cy="17.8" r="2.8" fill="none" stroke="#606060" stroke-width="0.7" stroke-dasharray="1.4 0.8"/>
<rect x="79.2" y="15" width="5.6" height="5.8" fill="#909090" stroke="#505050" stroke-width="0.5"/><rect x="80" y="15.6" width="2.5" height="4.5" fill="#c8c8c8"/>
<rect x="88.4" y="14" width="0.6" height="8" fill="#9a9a9a"/><rect x="89" y="14" width="0.5" height="8" fill="#fff"/>
<rect x="90.2" y="14.3" width="20.5" height="6.3" fill="#fff" stroke="#404040" stroke-width="0.6"/><rect x="105.2" y="15" width="5" height="5" fill="#d4d0c8"/><path d="M106.5 17 L108.9 17 L107.7 18.5Z" fill="#000"/>
<text x="91.5" y="19.3" font-size="4.2" fill="#333" font-family="Liberation Sans">Wd8</text>
<path d="M112.5 15.5 L119.5 20.5 M119.5 15.5 L112.5 20.5 M116 14.8 L116 21" stroke="#202020" stroke-width="0.9"/><circle cx="116" cy="18" r="2" fill="#303030"/>
<path d="M124.8 15.5 L126.5 17 M129.5 15.5 L127.8 17 M124.8 20.5 L126.5 19 M129.5 20.5 L127.8 19" stroke="#40a040" stroke-width="0.8"/>
</svg>
<i style="left:137.5px;top:23px;width:210.5px;height:245px;background:#7f7f7f;"></i><i style="left:134px;top:23px;width:3px;height:247px;background:#ece9e0;"></i><i style="left:136.6px;top:23px;width:1px;height:247px;background:#6a6a6a;"></i><i style="left:348px;top:0px;width:1.2px;height:270px;background:#3a3a3a;"></i><i style="left:0px;top:268.6px;width:350px;height:1.4px;background:#4a4a4a;"></i><i style="left:0px;top:23px;width:134px;height:8px;background:#cbc7be;"></i><b style="left:3px;top:24.4px;font-size:4.4px;color:#444;">Control Panel</b><b style="left:129px;top:24px;font-size:5.5px;color:#222;font-weight:bold">×</b><i style="left:2px;top:31px;width:56px;height:6.3px;background:#d4d0c8;"></i><i style="left:2.3px;top:31.6px;width:12.7px;height:5.7px;background:#d4d0c8;border-right:0.7px solid #808080"></i><b style="left:4.3px;top:32.4px;font-size:4.3px;color:#333;">Cell</b><i style="left:15px;top:31.6px;width:14.7px;height:5.7px;background:#d4d0c8;border-right:0.7px solid #808080"></i><b style="left:17px;top:32.4px;font-size:4.3px;color:#333;">Objs</b><i style="left:29.7px;top:31.6px;width:13.3px;height:5.7px;background:#d4d0c8;border-right:0.7px solid #808080"></i><b style="left:31.7px;top:32.4px;font-size:4.3px;color:#333;">Mtls</b><i style="left:43px;top:31px;width:15.3px;height:6.3px;background:#e0ddd6;border-right:0.8px solid #555;border-left:0.5px solid #fff;border-top:0.5px solid #fff"></i><b style="left:45.5px;top:31.8px;font-size:4.3px;color:#222;">Tools</b><i style="left:2px;top:37px;width:132px;height:0.7px;background:#808080;"></i><i style="left:3px;top:37.5px;width:131px;height:5.4px;background:#fff;border-top:1px solid #808080;border-left:1px solid #808080;border-right:1px solid #fff;border-bottom:1px solid #fff"></i><b style="left:4.5px;top:38.6px;font-size:4.1px;color:#333;">Create new Scene Tool</b><i style="left:128px;top:38.2px;width:5.5px;height:4.4px;background:#d4d0c8;border:0.5px solid #555"></i><i style="left:3px;top:43.2px;width:131px;height:23.3px;background:#fff;border-top:1px solid #808080;border-left:1px solid #808080;border-right:1px solid #fff;border-bottom:1px solid #fff"></i><b style="left:5px;top:44.5px;font-size:4.3px;color:#444;">Texture Painting</b><b style="left:4px;top:68.3px;font-size:3.9px;color:#444;">Tool Name :</b><i style="left:26px;top:67.4px;width:101.3px;height:6.5px;background:#fff;border-top:1px solid #808080;border-left:1px solid #808080;border-right:1px solid #fff;border-bottom:1px solid #fff"></i><b style="left:27.5px;top:68.6px;font-size:4.2px;color:#333;">Texture Painting</b><i style="left:128px;top:67px;width:6px;height:6px;background:#d4d0c8;border:0.5px solid #888"></i><i style="left:2.5px;top:75px;width:131px;height:163px;background:transparent;border:0.7px solid #707070"></i><i style="left:4.5px;top:75.5px;width:126px;height:150px;background:#d4d0c8;"></i><i style="left:4.5px;top:75.5px;width:1px;height:150px;background:#fff;"></i><i style="left:129.6px;top:75.5px;width:1px;height:150px;background:#fff;"></i><b style="left:5px;top:75.7px;font-size:4.4px;color:#222;">▼ Texture Painting</b><b style="left:8px;top:80.8px;font-size:4.4px;color:#333;">Paint Objects</b><i style="left:5.3px;top:86.3px;width:113.7px;height:30.7px;background:#fff;border-top:1px solid #808080;border-left:1px solid #808080;border-right:1px solid #fff;border-bottom:1px solid #fff"></i><i style="left:6.3px;top:87.2px;width:111.7px;height:5.6px;background:#a8b8dc;"></i><b style="left:13px;top:86.8px;font-size:4.2px;color:#223;">Skull-M</b><i style="left:98px;top:87.2px;width:3.6px;height:3.6px;background:#333;border-radius:1px;opacity:.8"></i><i style="left:103px;top:87.2px;width:3.6px;height:3.6px;background:#3a5a3a;border-radius:1px;opacity:.8"></i><i style="left:108.5px;top:87.2px;width:3.6px;height:3.6px;background:#667;border-radius:1px;opacity:.8"></i><i style="left:121.4px;top:87.2px;width:7.6px;height:7.6px;background:#50c050;border-radius:50%;opacity:.9"></i><i style="left:121.4px;top:97.9px;width:7.6px;height:7.6px;background:#e04040;border-radius:50%;opacity:.9"></i><i style="left:121.4px;top:108.60000000000001px;width:7.6px;height:7.6px;background:#6a6ad0;border-radius:50%;opacity:.9"></i><i style="left:4.5px;top:122.5px;width:6.5px;height:6.5px;background:#c03030;border-radius:40%;opacity:.75"></i><i style="left:14.9px;top:122.5px;width:6.5px;height:6.5px;background:#b05a4a;border-radius:40%;opacity:.75"></i><i style="left:25.3px;top:122.5px;width:6.5px;height:6.5px;background:#303030;border-radius:40%;opacity:.75"></i><i style="left:35.7px;top:122.5px;width:6.5px;height:6.5px;background:#b05060;border-radius:40%;opacity:.75"></i><i style="left:46.1px;top:122.5px;width:6.5px;height:6.5px;background:#606880;border-radius:40%;opacity:.75"></i><i style="left:56.5px;top:122.5px;width:6.5px;height:6.5px;background:#a0a0a0;border-radius:40%;opacity:.75"></i><i style="left:66.9px;top:122.5px;width:6.5px;height:6.5px;background:#4030b0;border-radius:40%;opacity:.75"></i><i style="left:77.3px;top:122.5px;width:6.5px;height:6.5px;background:#3050d0;border-radius:40%;opacity:.75"></i><i style="left:87.7px;top:122.5px;width:6.5px;height:6.5px;background:#8070c0;border-radius:40%;opacity:.75"></i><i style="left:98.10000000000001px;top:122.5px;width:6.5px;height:6.5px;background:#9080c0;border-radius:40%;opacity:.75"></i><i style="left:108.5px;top:122.5px;width:6.5px;height:6.5px;background:#a07050;border-radius:40%;opacity:.75"></i><i style="left:118.9px;top:122.5px;width:6.5px;height:6.5px;background:#5060d0;border-radius:40%;opacity:.75"></i><b style="left:6px;top:132.6px;font-size:4.3px;color:#333;">Channel Options</b><b style="left:6px;top:138.8px;font-size:4.3px;color:#444;">Blend Mode :</b><i style="left:36.5px;top:137.7px;width:29.5px;height:6.8px;background:#fff;border-top:1px solid #808080;border-left:1px solid #808080;border-right:1px solid #fff;border-bottom:1px solid #fff"></i><b style="left:38px;top:138.9px;font-size:4.2px;color:#333;">Normal</b><i style="left:60px;top:138.6px;width:5.4px;height:5px;background:#d4d0c8;border:0.5px solid #444"></i><b style="left:70px;top:139px;font-size:4.3px;color:#444;">Opacity :</b><i style="left:99px;top:137.7px;width:29.4px;height:6.8px;background:#fff;border-top:1px solid #808080;border-left:1px solid #808080;border-right:1px solid #fff;border-bottom:1px solid #fff"></i><b style="left:109.28999999999999px;top:138.29999999999998px;font-size:4.3px;color:#555;">57.00</b><i style="left:3.5px;top:147.6px;width:128px;height:0.6px;background:#9a9a9a;"></i><i style="left:3.5px;top:148.2px;width:128px;height:0.6px;background:#fff;"></i><b style="left:6px;top:149.8px;font-size:4.3px;color:#333;">Brush Options</b><b style="left:6px;top:156.8px;font-size:4.3px;color:#444;">Paint :</b><i style="left:36.5px;top:155.6px;width:16px;height:7.2px;background:#fff;border-top:1px solid #808080;border-left:1px solid #808080;border-right:1px solid #fff;border-bottom:1px solid #fff"></i><b style="left:37.5px;top:157px;font-size:4.1px;color:#333;">Color</b><i style="left:47px;top:156.4px;width:5px;height:5.6px;background:#d4d0c8;border:0.5px solid #444"></i><i style="left:53px;top:155.6px;width:5.2px;height:7.4px;background:#000;"></i><b style="left:69px;top:157px;font-size:4.3px;color:#444;">Shape :</b><i style="left:99.5px;top:156px;width:6.5px;height:6.5px;background:#30d030;border-radius:50%;border:0.6px solid #2a7a2a"></i><svg style="position:absolute;left:109px;top:154px" width="10" height="10" viewBox="0 0 10 10"><path d="M1 1 Q2 1 3 4 Q5 8 8 9 L1 9Z" fill="#000"/></svg><b style="left:6px;top:167.8px;font-size:4.3px;color:#444;">Radius :</b><i style="left:36.5px;top:167px;width:29.5px;height:5.8px;background:#fff;border-top:1px solid #808080;border-left:1px solid #808080;border-right:1px solid #fff;border-bottom:1px solid #fff"></i><b style="left:46.825px;top:167.6px;font-size:4.3px;color:#555;">4.00</b><b style="left:69px;top:167.8px;font-size:4.3px;color:#444;">Spacing :</b><i style="left:99px;top:167px;width:29.4px;height:5.8px;background:#fff;border-top:1px solid #808080;border-left:1px solid #808080;border-right:1px solid #fff;border-bottom:1px solid #fff"></i><b style="left:109.28999999999999px;top:167.6px;font-size:4.3px;color:#555;">5.00</b><b style="left:6px;top:176.4px;font-size:4.3px;color:#444;">Pressure :</b><i style="left:36.5px;top:175.6px;width:29.5px;height:5.8px;background:#fff;border-top:1px solid #808080;border-left:1px solid #808080;border-right:1px solid #fff;border-bottom:1px solid #fff"></i><b style="left:46.825px;top:176.2px;font-size:4.3px;color:#555;">100.00</b><b style="left:69px;top:176.4px;font-size:4.3px;color:#444;">Fade :</b><i style="left:99px;top:175.6px;width:29.4px;height:5.8px;background:#fff;border-top:1px solid #808080;border-left:1px solid #808080;border-right:1px solid #fff;border-bottom:1px solid #fff"></i><b style="left:109.28999999999999px;top:176.2px;font-size:4.3px;color:#555;">100.00</b><i style="left:93.4px;top:175.79999999999998px;width:4.2px;height:4.8px;background:#fff;border-top:0.6px solid #666;border-left:0.6px solid #666"></i><b style="left:6px;top:185.20000000000002px;font-size:4.3px;color:#444;">Hardness :</b><i style="left:36.5px;top:184.4px;width:29.5px;height:5.8px;background:#fff;border-top:1px solid #808080;border-left:1px solid #808080;border-right:1px solid #fff;border-bottom:1px solid #fff"></i><b style="left:46.825px;top:185.0px;font-size:4.3px;color:#555;">68.00</b><b style="left:69px;top:185.20000000000002px;font-size:4.3px;color:#444;">Jitter :</b><i style="left:99px;top:184.4px;width:29.4px;height:5.8px;background:#fff;border-top:1px solid #808080;border-left:1px solid #808080;border-right:1px solid #fff;border-bottom:1px solid #fff"></i><b style="left:109.28999999999999px;top:185.0px;font-size:4.3px;color:#555;">64</b><i style="left:93.4px;top:184.6px;width:4.2px;height:4.8px;background:#fff;border-top:0.6px solid #666;border-left:0.6px solid #666"></i><b style="left:6px;top:193.8px;font-size:4.3px;color:#444;">Aspect :</b><i style="left:36.5px;top:193px;width:29.5px;height:5.8px;background:#fff;border-top:1px solid #808080;border-left:1px solid #808080;border-right:1px solid #fff;border-bottom:1px solid #fff"></i><b style="left:46.825px;top:193.6px;font-size:4.3px;color:#555;">3.00</b><b style="left:69px;top:193.8px;font-size:4.3px;color:#444;">Airbrush :</b><i style="left:99px;top:193px;width:29.4px;height:5.8px;background:#fff;border-top:1px solid #808080;border-left:1px solid #808080;border-right:1px solid #fff;border-bottom:1px solid #fff"></i><b style="left:109.28999999999999px;top:193.6px;font-size:4.3px;color:#555;">1.00</b><i style="left:93.4px;top:193.2px;width:4.2px;height:4.8px;background:#fff;border-top:0.6px solid #666;border-left:0.6px solid #666"></i><b style="left:6px;top:202.8px;font-size:4.3px;color:#444;">Angle :</b><i style="left:36.5px;top:202px;width:29.5px;height:5.8px;background:#fff;border-top:1px solid #808080;border-left:1px solid #808080;border-right:1px solid #fff;border-bottom:1px solid #fff"></i><b style="left:46.825px;top:202.6px;font-size:4.3px;color:#555;">0.00</b><i style="left:3.5px;top:210.2px;width:128px;height:0.6px;background:#9a9a9a;"></i><i style="left:3.5px;top:210.8px;width:128px;height:0.6px;background:#fff;"></i><b style="left:6px;top:212.4px;font-size:4.3px;color:#333;">Edit Erase Tool</b><b style="left:6px;top:218.9px;font-size:4.3px;color:#444;">Opacity :</b><i style="left:36.5px;top:218px;width:29.5px;height:5.8px;background:#fff;border-top:1px solid #808080;border-left:1px solid #808080;border-right:1px solid #fff;border-bottom:1px solid #fff"></i><b style="left:46.825px;top:218.6px;font-size:4.3px;color:#555;">100.00</b><b style="left:69px;top:218.9px;font-size:4.3px;color:#333;font-weight:bold">Hard Edges :</b><i style="left:98.7px;top:217.6px;width:4.5px;height:4.8px;background:#fff;border-top:0.6px solid #666;border-left:0.6px solid #666"></i><i style="left:3.5px;top:226px;width:128px;height:0.6px;background:#9a9a9a;"></i><i style="left:3.5px;top:226.6px;width:128px;height:0.6px;background:#fff;"></i><i style="left:2.5px;top:237.5px;width:131px;height:0.8px;background:#555;"></i><svg style="position:absolute;left:0;top:0" width="350" height="270" viewBox="271 230 350 270">
<defs>
<filter id="nz2" x="0" y="0" width="1" height="1" color-interpolation-filters="sRGB"><feTurbulence type="fractalNoise" baseFrequency="0.45" numOctaves="2" seed="7"/><feColorMatrix values="0 0 0 0 0.40  0 0 0 0 0.38  0 0 0 0 0.38  1.2 0 0 0 -0.42"/><feComposite in2="SourceGraphic" operator="in"/></filter>
<radialGradient id="eyeL2" cx="0.4" cy="0.35" r="0.7"><stop offset="0" stop-color="#9494a0"/><stop offset="0.7" stop-color="#84848e"/><stop offset="1" stop-color="#6c6c74"/></radialGradient>
<linearGradient id="teeth2" x1="0" y1="0" x2="0" y2="1"><stop offset="0" stop-color="#92929e"/><stop offset="0.5" stop-color="#8a8a96"/><stop offset="1" stop-color="#76767f"/></linearGradient>
</defs>
<path d="M502.8 262.8 C494.0 263.1 483.1 263.8 475.0 266.0 C466.9 268.2 459.8 271.5 454.0 276.0 C448.2 280.5 443.8 286.7 440.0 293.0 C436.2 299.3 433.1 306.8 431.5 314.0 C429.9 321.2 430.2 328.3 430.5 336.0 C430.8 343.7 431.9 351.7 433.0 360.0 C434.1 368.3 434.8 379.0 437.0 386.0 C439.2 393.0 443.2 397.5 446.0 402.0 C448.8 406.5 450.8 408.5 454.0 413.0 C457.2 417.5 460.7 423.3 465.0 429.0 C469.3 434.7 475.7 441.2 480.0 447.0 C484.3 452.8 485.8 457.9 490.7 463.5 C495.6 469.1 501.4 476.2 509.7 480.8 C518.0 485.4 532.4 490.6 540.8 491.0 C549.2 491.4 554.8 486.3 560.0 483.0 C565.2 479.7 569.0 475.3 572.0 471.0 C575.0 466.7 576.6 462.2 578.0 457.0 C579.4 451.8 579.8 445.3 580.5 440.0 C581.2 434.7 581.5 429.3 582.0 425.0 C582.5 420.7 583.5 417.5 583.5 414.0 C583.5 410.5 580.6 407.5 582.0 404.0 C583.4 400.5 589.3 397.0 592.0 393.0 C594.7 389.0 596.5 385.2 598.0 380.0 C599.5 374.8 600.5 368.2 601.0 362.0 C601.5 355.8 601.8 349.2 601.0 343.0 C600.2 336.8 598.7 330.5 596.0 325.0 C593.3 319.5 588.0 314.3 585.0 310.0 C582.0 305.7 581.2 303.7 578.0 299.0 C574.8 294.3 570.7 286.8 566.0 282.0 C561.3 277.2 556.3 273.0 550.0 270.0 C543.7 267.0 535.9 265.2 528.0 264.0 C520.1 262.8 511.6 262.5 502.8 262.8 Z" fill="#423e3e"/>
<path d="M502.8 262.8 C494.0 263.1 483.1 263.8 475.0 266.0 C466.9 268.2 459.8 271.5 454.0 276.0 C448.2 280.5 443.8 286.7 440.0 293.0 C436.2 299.3 433.1 306.8 431.5 314.0 C429.9 321.2 430.2 328.3 430.5 336.0 C430.8 343.7 431.9 351.7 433.0 360.0 C434.1 368.3 434.8 379.0 437.0 386.0 C439.2 393.0 443.2 397.5 446.0 402.0 C448.8 406.5 450.8 408.5 454.0 413.0 C457.2 417.5 460.7 423.3 465.0 429.0 C469.3 434.7 475.7 441.2 480.0 447.0 C484.3 452.8 485.8 457.9 490.7 463.5 C495.6 469.1 501.4 476.2 509.7 480.8 C518.0 485.4 532.4 490.6 540.8 491.0 C549.2 491.4 554.8 486.3 560.0 483.0 C565.2 479.7 569.0 475.3 572.0 471.0 C575.0 466.7 576.6 462.2 578.0 457.0 C579.4 451.8 579.8 445.3 580.5 440.0 C581.2 434.7 581.5 429.3 582.0 425.0 C582.5 420.7 583.5 417.5 583.5 414.0 C583.5 410.5 580.6 407.5 582.0 404.0 C583.4 400.5 589.3 397.0 592.0 393.0 C594.7 389.0 596.5 385.2 598.0 380.0 C599.5 374.8 600.5 368.2 601.0 362.0 C601.5 355.8 601.8 349.2 601.0 343.0 C600.2 336.8 598.7 330.5 596.0 325.0 C593.3 319.5 588.0 314.3 585.0 310.0 C582.0 305.7 581.2 303.7 578.0 299.0 C574.8 294.3 570.7 286.8 566.0 282.0 C561.3 277.2 556.3 273.0 550.0 270.0 C543.7 267.0 535.9 265.2 528.0 264.0 C520.1 262.8 511.6 262.5 502.8 262.8 Z" fill="#000" filter="url(#nz2)"/>
<ellipse class="lt" cx="486.4" cy="344.7" rx="30.2" ry="25.9" fill="url(#eyeL2)" stroke="#5e5e64" stroke-width="1.2"/>
<ellipse class="lp" cx="490.7" cy="339.8" rx="18.8" ry="14.5" fill="#3e3e44"/>
<ellipse class="lt" cx="573.4" cy="349.8" rx="19.5" ry="23.3" fill="url(#eyeL2)" stroke="#5e5e64" stroke-width="1.2"/>
<ellipse class="lp" cx="577.8" cy="344.7" rx="11.5" ry="12.5" fill="#3e3e44"/>
<path d="M534.0 377.0 C535.3 375.7 537.8 374.8 540.0 375.0 C542.2 375.2 545.6 376.2 547.0 378.0 C548.4 379.8 548.8 383.3 548.5 386.0 C548.2 388.7 546.4 392.2 545.0 394.0 C543.6 395.8 541.7 397.5 540.0 397.0 C538.3 396.5 536.3 393.3 535.0 391.0 C533.7 388.7 532.2 385.3 532.0 383.0 C531.8 380.7 532.7 378.3 534.0 377.0 Z" fill="#2e2b2b"/>
<path d="M478.7 434.0 C479.2 431.6 482.7 429.8 485.0 428.5 C487.3 427.2 488.3 426.8 492.5 426.4 C496.7 426.0 503.8 426.2 510.0 426.0 C516.2 425.8 522.5 425.2 530.0 425.0 C537.5 424.8 547.5 424.9 555.0 425.0 C562.5 425.1 571.1 424.6 575.3 425.6 C579.5 426.6 579.0 428.4 580.0 431.0 C581.0 433.6 581.3 437.3 581.3 441.0 C581.3 444.7 580.9 449.0 580.0 453.0 C579.1 457.0 580.2 461.8 576.0 465.0 C571.8 468.2 562.6 470.4 555.0 472.0 C547.4 473.6 537.9 475.0 530.4 474.8 C522.9 474.6 516.1 472.6 510.0 471.0 C503.9 469.4 498.0 467.8 494.0 465.0 C490.0 462.2 488.0 457.7 486.0 454.0 C484.0 450.3 483.2 446.3 482.0 443.0 C480.8 439.7 478.2 436.4 478.7 434.0 Z" fill="url(#teeth2)" class="lt"/>
<path d="M507 427 L506 470 M527.8 426 L527.5 474.5 M550 425.5 L550.3 473 M567.6 425.5 L568 469" stroke="#66666e" stroke-width="1.4" class="lt"/>
<path d="M482 447 C500 452 540 452 580 448" stroke="#a0a0aa" stroke-width="0.9" fill="none" class="lt"/>
</svg></div></div>
<div class="a" style="left:909px;top:184px;width:270px;font-size:11.8px;line-height:15px;color:#999">Here you will see the text that was selected when snapshot was captured.</div>
<svg class="a" style="left:909px;top:222px" width="16" height="13" viewBox="0 0 16 13"><defs><radialGradient id="g2" cx="0.55" cy="0.45" r="0.6"><stop offset="0" stop-color="#b8ecff"/><stop offset="0.45" stop-color="#5fb2ee"/><stop offset="1" stop-color="#1f6cbc"/></radialGradient><clipPath id="c2"><rect x="1" y="2.5" width="14" height="10"/></clipPath></defs><rect x="0.5" y="0.5" width="15" height="12" fill="#fff" stroke="#8c8c8c"/><rect x="1" y="1" width="14" height="1.8" fill="#c0c0c0"/><circle cx="9.6" cy="11.2" r="7.6" fill="url(#g2)" clip-path="url(#c2)"/></svg>
<div class="a" style="left:929px;top:222px;width:251px;height:16px;overflow:hidden"><div class="t" style="left:0;top:1px;font-size:12px;color:#111">Microformat - Wikipedia, the free encyclopedia</div></div>
<div class="a" style="left:909px;top:238px;width:103px;height:79px;background:#fff;border:1px solid #d8d8d8;border-right-color:#a0a0a0;overflow:hidden"><div class="a" style="left:0;top:0;width:103px;height:3px;background:linear-gradient(90deg,#e4e0d0,#e8e4d8 80%,#f0b060)"></div><div class="a" style="left:0;top:3px;width:103px;height:3px;background:#f4f4f4"></div><div class="a" style="left:0;top:6px;width:15px;height:73px;background:#f8f8f8"></div><div class="a" style="left:98px;top:6px;width:4px;height:73px;background:#f0f0f0;border-left:1px solid #e0e0e0"></div><div class="a" style="left:19px;top:8px;width:35px;height:1px;background:#d4d4d4"></div><div class="a" style="left:16px;top:13px;width:40px;height:1px;background:#d4d4d4"></div><div class="a" style="left:16px;top:15px;width:32px;height:1px;background:#d4d4d4"></div><div class="a" style="left:19px;top:17px;width:31px;height:1px;background:#d4d4d4"></div><div class="a" style="left:16px;top:19px;width:39px;height:1px;background:#d4d4d4"></div><div class="a" style="left:16px;top:21px;width:30px;height:1px;background:#d4d4d4"></div><div class="a" style="left:16px;top:23px;width:67px;height:1px;background:#d4d4d4"></div><div class="a" style="left:16px;top:28px;width:61px;height:1px;background:#d4d4d4"></div><div class="a" style="left:19px;top:30px;width:51px;height:1px;background:#d4d4d4"></div><div class="a" style="left:19px;top:32px;width:40px;height:1px;background:#d4d4d4"></div><div class="a" style="left:16px;top:34px;width:77px;height:1px;background:#d4d4d4"></div><div class="a" style="left:16px;top:36px;width:46px;height:1px;background:#c4cce0"></div><div class="a" style="left:16px;top:38px;width:40px;height:1px;background:#d4d4d4"></div><div class="a" style="left:16px;top:40px;width:70px;height:1px;background:#d4d4d4"></div><div class="a" style="left:16px;top:42px;width:49px;height:1px;background:#d4d4d4"></div><div class="a" style="left:16px;top:44px;width:55px;height:1px;background:#d4d4d4"></div><div class="a" style="left:16px;top:46px;width:46px;height:1px;background:#d4d4d4"></div><div class="a" style="left:16px;top:48px;width:33px;height:1px;background:#d4d4d4"></div><div class="a" style="left:16px;top:50px;width:53px;height:1px;background:#d4d4d4"></div><div class="a" style="left:16px;top:55px;width:39px;height:1px;background:#d4d4d4"></div><div class="a" style="left:19px;top:57px;width:80px;height:1px;background:#d4d4d4"></div><div class="a" style="left:19px;top:62px;width:33px;height:1px;background:#d4d4d4"></div><div class="a" style="left:16px;top:64px;width:79px;height:1px;background:#d4d4d4"></div><div class="a" style="left:19px;top:66px;width:62px;height:1px;background:#d4d4d4"></div><div class="a" style="left:16px;top:68px;width:38px;height:1px;background:#d4d4d4"></div><div class="a" style="left:19px;top:70px;width:78px;height:1px;background:#c4cce0"></div><div class="a" style="left:0;top:77px;width:103px;height:2px;background:linear-gradient(90deg,#c8b890,#d8c8a0 60%,#c0a0a0)"></div></div>
<svg class="a" style="left:909px;top:326px" width="16" height="13" viewBox="0 0 16 13"><defs><radialGradient id="g3" cx="0.55" cy="0.45" r="0.6"><stop offset="0" stop-color="#b8ecff"/><stop offset="0.45" stop-color="#5fb2ee"/><stop offset="1" stop-color="#1f6cbc"/></radialGradient><clipPath id="c3"><rect x="1" y="2.5" width="14" height="10"/></clipPath></defs><rect x="0.5" y="0.5" width="15" height="12" fill="#fff" stroke="#8c8c8c"/><rect x="1" y="1" width="14" height="1.8" fill="#c0c0c0"/><circle cx="9.6" cy="11.2" r="7.6" fill="url(#g3)" clip-path="url(#c3)"/></svg>
<div class="a" style="left:929px;top:326px;width:251px;height:16px;overflow:hidden"><div class="t" style="left:0;top:1px;font-size:12px;color:#111">Graph (mathematics) - Wikipedia, the free encyclopedia</div></div>
<div class="a" style="left:909px;top:342px;width:103px;height:79px;background:#fff;border:1px solid #d8d8d8;border-right-color:#a0a0a0;overflow:hidden"><div class="a" style="left:0;top:0;width:103px;height:3px;background:linear-gradient(90deg,#e4e0d0,#e8e4d8 80%,#f0b060)"></div><div class="a" style="left:0;top:3px;width:103px;height:3px;background:#f4f4f4"></div><div class="a" style="left:0;top:6px;width:15px;height:73px;background:#f8f8f8"></div><div class="a" style="left:98px;top:6px;width:4px;height:73px;background:#f0f0f0;border-left:1px solid #e0e0e0"></div><div class="a" style="left:16px;top:8px;width:67px;height:1px;background:#d4d4d4"></div><div class="a" style="left:16px;top:10px;width:78px;height:1px;background:#c4cce0"></div><div class="a" style="left:16px;top:12px;width:66px;height:1px;background:#d4d4d4"></div><div class="a" style="left:19px;top:14px;width:50px;height:1px;background:#d4d4d4"></div><div class="a" style="left:16px;top:16px;width:73px;height:1px;background:#c4cce0"></div><div class="a" style="left:19px;top:18px;width:31px;height:1px;background:#d4d4d4"></div><div class="a" style="left:19px;top:20px;width:67px;height:1px;background:#d4d4d4"></div><div class="a" style="left:16px;top:25px;width:67px;height:1px;background:#c4cce0"></div><div class="a" style="left:19px;top:27px;width:45px;height:1px;background:#d4d4d4"></div><div class="a" style="left:19px;top:29px;width:62px;height:1px;background:#d4d4d4"></div><div class="a" style="left:16px;top:31px;width:46px;height:1px;background:#d4d4d4"></div><div class="a" style="left:19px;top:33px;width:79px;height:1px;background:#d4d4d4"></div><div class="a" style="left:19px;top:35px;width:64px;height:1px;background:#d4d4d4"></div><div class="a" style="left:19px;top:37px;width:73px;height:1px;background:#d4d4d4"></div><div class="a" style="left:16px;top:39px;width:33px;height:1px;background:#d4d4d4"></div><div class="a" style="left:19px;top:44px;width:75px;height:1px;background:#d4d4d4"></div><div class="a" style="left:16px;top:46px;width:63px;height:1px;background:#d4d4d4"></div><div class="a" style="left:16px;top:48px;width:40px;height:1px;background:#d4d4d4"></div><div class="a" style="left:16px;top:50px;width:57px;height:1px;background:#d4d4d4"></div><div class="a" style="left:16px;top:52px;width:73px;height:1px;background:#d4d4d4"></div><div class="a" style="left:19px;top:54px;width:81px;height:1px;background:#d4d4d4"></div><div class="a" style="left:16px;top:59px;width:68px;height:1px;background:#d4d4d4"></div><div class="a" style="left:19px;top:61px;width:72px;height:1px;background:#d4d4d4"></div><div class="a" style="left:16px;top:63px;width:58px;height:1px;background:#d4d4d4"></div><div class="a" style="left:16px;top:68px;width:44px;height:1px;background:#d4d4d4"></div><div class="a" style="left:16px;top:70px;width:35px;height:1px;background:#d4d4d4"></div><div class="a" style="left:16px;top:72px;width:49px;height:1px;background:#d4d4d4"></div><div class="a" style="left:19px;top:74px;width:48px;height:1px;background:#d4d4d4"></div><svg class="a" style="left:70px;top:14px" width="28" height="20" viewBox="0 0 28 20"><rect x="0" y="0" width="28" height="20" fill="#fff"/><path d="M4 4 L9 9 L15 7 L20 12 L24 8 M9 9 L13 15 L20 12" stroke="#888" stroke-width="0.7" fill="none"/><circle cx="4" cy="4" r="1.6" fill="none" stroke="#666" stroke-width="0.6"/><circle cx="9" cy="9" r="1.6" fill="none" stroke="#666" stroke-width="0.6"/><circle cx="15" cy="7" r="1.6" fill="none" stroke="#666" stroke-width="0.6"/><circle cx="20" cy="12" r="1.6" fill="none" stroke="#666" stroke-width="0.6"/><circle cx="24" cy="8" r="1.6" fill="none" stroke="#666" stroke-width="0.6"/><circle cx="13" cy="15" r="1.6" fill="none" stroke="#666" stroke-width="0.6"/></svg><div class="a" style="left:0;top:77px;width:103px;height:2px;background:linear-gradient(90deg,#c8b890,#d8c8a0 60%,#c0a0a0)"></div></div>
<svg class="a" style="left:909px;top:430px" width="16" height="13" viewBox="0 0 16 13"><defs><radialGradient id="g4" cx="0.55" cy="0.45" r="0.6"><stop offset="0" stop-color="#b8ecff"/><stop offset="0.45" stop-color="#5fb2ee"/><stop offset="1" stop-color="#1f6cbc"/></radialGradient><clipPath id="c4"><rect x="1" y="2.5" width="14" height="10"/></clipPath></defs><rect x="0.5" y="0.5" width="15" height="12" fill="#fff" stroke="#8c8c8c"/><rect x="1" y="1" width="14" height="1.8" fill="#c0c0c0"/><circle cx="9.6" cy="11.2" r="7.6" fill="url(#g4)" clip-path="url(#c4)"/></svg>
<div class="a" style="left:929px;top:430px;width:251px;height:16px;overflow:hidden"><div class="t" style="left:0;top:1px;font-size:12px;color:#111">Under Frozen Tundra, an Icebreaking Ship Uncovers the Mistakes</div></div>
<div class="a" style="left:909px;top:446px;width:103px;height:79px;background:#fff;border:1px solid #c8c8c8;overflow:hidden"><div class="a" style="left:0;top:0;width:103px;height:3px;background:linear-gradient(90deg,#d8d4c4,#e0dccc 80%,#f0a040)"></div><div class="a" style="left:0;top:3px;width:103px;height:3px;background:#f2f2f2"></div><div class="a" style="left:40px;top:9px;width:21px;height:2px;background:#555"></div><div class="a" style="left:86px;top:9px;width:12px;height:2px;background:#7a9ac0"></div><div class="a" style="left:22px;top:11px;width:57px;height:1px;background:linear-gradient(90deg,#e0a0a0,#e0e0a0)"></div><div class="a" style="left:9px;top:16px;width:73px;height:2px;background:#444"></div><div class="a" style="left:9px;top:20px;width:18px;height:1px;background:#e0c080"></div><div class="a" style="left:9px;top:23px;width:84px;height:47px;background:linear-gradient(180deg,#2454a4 0%,#3468b8 50%,#5a7cc0 62%,#8090c0 68%,#303850 70%,#3a4a78 78%,#5878b8 82%,#4a68a8 100%)"></div><svg class="a" style="left:9px;top:23px" width="84" height="47" viewBox="0 0 84 47"><path d="M34 1 L40 1 L41 20 L33 20Z" fill="#1e2638"/><path d="M26 20 L57 19 L57 24 L26 25Z" fill="#e8ecf2"/><path d="M26 25 L57 24 L57 41 L27 41Z" fill="#d0d6e2"/><path d="M28 21.5 L55 21 L55 23.5 L28 24Z" fill="#3a4460"/><path d="M26 40 L63 40 L60 47 L26 47Z" fill="#14161e"/><rect x="0" y="40" width="24" height="7" fill="#101010" opacity=".85"/><path d="M4 41.5 L7 43.5 L4 45.5Z" fill="#fff"/></svg><div class="a" style="left:8px;top:73px;width:50px;height:1px;background:#d0d0d0"></div><div class="a" style="left:0;top:77px;width:103px;height:2px;background:linear-gradient(90deg,#c8b890,#d8c8a0 60%,#c0a0c0)"></div></div>
<svg class="a" style="left:909px;top:534px" width="16" height="13" viewBox="0 0 16 13"><defs><radialGradient id="g5" cx="0.55" cy="0.45" r="0.6"><stop offset="0" stop-color="#b8ecff"/><stop offset="0.45" stop-color="#5fb2ee"/><stop offset="1" stop-color="#1f6cbc"/></radialGradient><clipPath id="c5"><rect x="1" y="2.5" width="14" height="10"/></clipPath></defs><rect x="0.5" y="0.5" width="15" height="12" fill="#fff" stroke="#8c8c8c"/><rect x="1" y="1" width="14" height="1.8" fill="#c0c0c0"/><circle cx="9.6" cy="11.2" r="7.6" fill="url(#g5)" clip-path="url(#c5)"/></svg>
<div class="a" style="left:929px;top:534px;width:251px;height:16px;overflow:hidden"><div class="t" style="left:0;top:1px;font-size:12px;color:#111">Semantic Web - Wikipedia, the free encyclopedia</div></div>
<div class="a" style="left:909px;top:550px;width:103px;height:79px;background:#fff;border:1px solid #d8d8d8;border-right-color:#a0a0a0;overflow:hidden"><div class="a" style="left:0;top:0;width:103px;height:3px;background:linear-gradient(90deg,#e4e0d0,#e8e4d8 80%,#f0b060)"></div><div class="a" style="left:0;top:3px;width:103px;height:3px;background:#f4f4f4"></div><div class="a" style="left:0;top:6px;width:15px;height:73px;background:#f8f8f8"></div><div class="a" style="left:98px;top:6px;width:4px;height:73px;background:#f0f0f0;border-left:1px solid #e0e0e0"></div><div class="a" style="left:16px;top:8px;width:60px;height:1px;background:#d4d4d4"></div><div class="a" style="left:16px;top:13px;width:57px;height:1px;background:#c4cce0"></div><div class="a" style="left:16px;top:15px;width:62px;height:1px;background:#d4d4d4"></div><div class="a" style="left:16px;top:17px;width:68px;height:1px;background:#d4d4d4"></div><div class="a" style="left:19px;top:19px;width:35px;height:1px;background:#d4d4d4"></div><div class="a" style="left:16px;top:21px;width:37px;height:1px;background:#d4d4d4"></div><div class="a" style="left:16px;top:26px;width:47px;height:1px;background:#d4d4d4"></div><div class="a" style="left:19px;top:28px;width:48px;height:1px;background:#d4d4d4"></div><div class="a" style="left:16px;top:30px;width:80px;height:1px;background:#d4d4d4"></div><div class="a" style="left:19px;top:32px;width:36px;height:1px;background:#d4d4d4"></div><div class="a" style="left:16px;top:34px;width:32px;height:1px;background:#d4d4d4"></div><div class="a" style="left:16px;top:36px;width:55px;height:1px;background:#d4d4d4"></div><div class="a" style="left:16px;top:38px;width:39px;height:1px;background:#d4d4d4"></div><div class="a" style="left:16px;top:40px;width:35px;height:1px;background:#c4cce0"></div><div class="a" style="left:16px;top:42px;width:79px;height:1px;background:#d4d4d4"></div><div class="a" style="left:19px;top:44px;width:43px;height:1px;background:#d4d4d4"></div><div class="a" style="left:16px;top:46px;width:47px;height:1px;background:#d4d4d4"></div><div class="a" style="left:16px;top:48px;width:50px;height:1px;background:#d4d4d4"></div><div class="a" style="left:16px;top:50px;width:53px;height:1px;background:#d4d4d4"></div><div class="a" style="left:16px;top:52px;width:38px;height:1px;background:#c4cce0"></div><div class="a" style="left:16px;top:57px;width:70px;height:1px;background:#d4d4d4"></div><div class="a" style="left:19px;top:59px;width:55px;height:1px;background:#d4d4d4"></div><div class="a" style="left:16px;top:61px;width:64px;height:1px;background:#d4d4d4"></div><div class="a" style="left:16px;top:63px;width:31px;height:1px;background:#d4d4d4"></div><div class="a" style="left:19px;top:68px;width:61px;height:1px;background:#d4d4d4"></div><div class="a" style="left:16px;top:70px;width:68px;height:1px;background:#d4d4d4"></div><div class="a" style="left:16px;top:72px;width:80px;height:1px;background:#d4d4d4"></div><div class="a" style="left:16px;top:74px;width:79px;height:1px;background:#d4d4d4"></div><div class="a" style="left:17px;top:30px;width:82px;height:4px;background:#3a88e0"></div><div class="a" style="left:17px;top:34px;width:4px;height:2px;background:#3a88e0"></div><div class="a" style="left:0;top:77px;width:103px;height:2px;background:linear-gradient(90deg,#c8b890,#d8c8a0 60%,#c0a0a0)"></div></div>
<svg class="a" style="left:909px;top:738px" width="16" height="13" viewBox="0 0 16 13"><defs><radialGradient id="g6" cx="0.55" cy="0.45" r="0.6"><stop offset="0" stop-color="#b8ecff"/><stop offset="0.45" stop-color="#5fb2ee"/><stop offset="1" stop-color="#1f6cbc"/></radialGradient><clipPath id="c6"><rect x="1" y="2.5" width="14" height="10"/></clipPath></defs><rect x="0.5" y="0.5" width="15" height="12" fill="#fff" stroke="#8c8c8c"/><rect x="1" y="1" width="14" height="1.8" fill="#c0c0c0"/><circle cx="9.6" cy="11.2" r="7.6" fill="url(#g6)" clip-path="url(#c6)"/></svg>
<div class="a" style="left:929px;top:738px;width:251px;height:16px;overflow:hidden"><div class="t" style="left:0;top:1px;font-size:12px;color:#111">Concept map - Wikipedia, the free encyclopedia</div></div>
<div class="a" style="left:909px;top:754px;width:103px;height:79px;background:#fff;border:1px solid #d8d8d8;border-right-color:#a0a0a0;overflow:hidden"><div class="a" style="left:0;top:0;width:103px;height:3px;background:linear-gradient(90deg,#e4e0d0,#e8e4d8 80%,#f0b060)"></div><div class="a" style="left:0;top:3px;width:103px;height:3px;background:#f4f4f4"></div><div class="a" style="left:0;top:6px;width:15px;height:73px;background:#f8f8f8"></div><div class="a" style="left:98px;top:6px;width:4px;height:73px;background:#f0f0f0;border-left:1px solid #e0e0e0"></div><div class="a" style="left:16px;top:8px;width:61px;height:1px;background:#d4d4d4"></div><div class="a" style="left:16px;top:10px;width:72px;height:1px;background:#d4d4d4"></div><div class="a" style="left:16px;top:12px;width:62px;height:1px;background:#d4d4d4"></div><div class="a" style="left:16px;top:14px;width:57px;height:1px;background:#d4d4d4"></div><div class="a" style="left:16px;top:16px;width:59px;height:1px;background:#d4d4d4"></div><div class="a" style="left:16px;top:18px;width:56px;height:1px;background:#c4cce0"></div><div class="a" style="left:16px;top:20px;width:45px;height:1px;background:#d4d4d4"></div><div class="a" style="left:16px;top:25px;width:50px;height:1px;background:#d4d4d4"></div><div class="a" style="left:19px;top:30px;width:51px;height:1px;background:#d4d4d4"></div><div class="a" style="left:16px;top:32px;width:62px;height:1px;background:#d4d4d4"></div><div class="a" style="left:16px;top:34px;width:52px;height:1px;background:#d4d4d4"></div><div class="a" style="left:16px;top:36px;width:71px;height:1px;background:#c4cce0"></div><div class="a" style="left:16px;top:38px;width:63px;height:1px;background:#d4d4d4"></div><div class="a" style="left:16px;top:40px;width:76px;height:1px;background:#d4d4d4"></div><div class="a" style="left:16px;top:42px;width:71px;height:1px;background:#c4cce0"></div><div class="a" style="left:16px;top:44px;width:72px;height:1px;background:#d4d4d4"></div><div class="a" style="left:16px;top:46px;width:52px;height:1px;background:#d4d4d4"></div><div class="a" style="left:16px;top:48px;width:69px;height:1px;background:#d4d4d4"></div><div class="a" style="left:19px;top:50px;width:50px;height:1px;background:#d4d4d4"></div><div class="a" style="left:19px;top:52px;width:48px;height:1px;background:#c4cce0"></div><div class="a" style="left:16px;top:54px;width:50px;height:1px;background:#d4d4d4"></div><div class="a" style="left:19px;top:56px;width:69px;height:1px;background:#d4d4d4"></div><div class="a" style="left:19px;top:58px;width:72px;height:1px;background:#c4cce0"></div><div class="a" style="left:16px;top:60px;width:58px;height:1px;background:#d4d4d4"></div><div class="a" style="left:16px;top:62px;width:42px;height:1px;background:#d4d4d4"></div><div class="a" style="left:16px;top:64px;width:76px;height:1px;background:#d4d4d4"></div><div class="a" style="left:19px;top:69px;width:45px;height:1px;background:#d4d4d4"></div><div class="a" style="left:16px;top:71px;width:76px;height:1px;background:#d4d4d4"></div><div class="a" style="left:16px;top:73px;width:77px;height:1px;background:#d4d4d4"></div><svg class="a" style="left:62px;top:12px" width="38" height="28" viewBox="0 0 38 28"><rect x="0" y="0" width="38" height="28" fill="#fff" stroke="#e0e0e0" stroke-width="0.5"/><path d="M6 16 L14 10 L22 8 L30 14 L24 20 L14 20 Z M22 8 L20 2 M30 14 L34 10 M30 14 L34 18" stroke="#a0b8c8" stroke-width="0.6" fill="none"/><rect x="3" y="15" width="5" height="2" fill="#90b0c0"/><rect x="18" y="1" width="5" height="2" fill="#90b0c0"/><rect x="32" y="8" width="5" height="2" fill="#90b0c0"/><rect x="32" y="17" width="5" height="2" fill="#90b0c0"/><rect x="12" y="19" width="5" height="2" fill="#90b0c0"/><rect x="22" y="24" width="6" height="2" fill="#90b0c0"/></svg><div class="a" style="left:0;top:77px;width:103px;height:2px;background:linear-gradient(90deg,#c8b890,#d8c8a0 60%,#c0a0a0)"></div></div>
<div class="a" style="left:909px;top:630px;width:270px;height:99px;overflow:hidden;font-size:11.8px;line-height:15px;color:#999">Vastness: The World Wide Web contains many billions of pages. The SNOMED CT medical terminology ontology alone contains 370,000 class names, and existing technology has not yet been able to eliminate all semantically duplicated terms. Any automated reasoning system will have to deal with truly huge inputs.</div>
</div></div>
<!-- scrollbar -->
<div class="a" style="left:1183px;top:83px;width:14px;height:728px;background:#f0f0f0"></div>
<div class="a" style="left:1183px;top:100px;width:14px;height:216px;background:#cdcdcd"></div>
<svg class="a" style="left:1183px;top:83px" width="14" height="17" viewBox="0 0 14 17"><path d="M6 9.5 L9.5 6 L13 9.5" fill="none" stroke="#8a8a8a" stroke-width="1.2"/></svg>
<svg class="a" style="left:1183px;top:795px" width="14" height="16" viewBox="0 0 14 16"><path d="M6 5 L9.5 8.5 L13 5" fill="none" stroke="#8a8a8a" stroke-width="1.2"/></svg>
</body></html>
